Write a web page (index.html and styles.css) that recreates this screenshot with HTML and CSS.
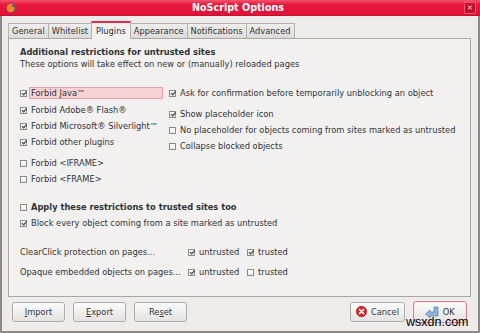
FILE: index.html
```html
<!DOCTYPE html>
<html lang="en">
<head>
  <meta charset="UTF-8" />
  <title>NoScript Options</title>
  <link rel="stylesheet" href="styles.css">
</head>
<body>
  <div class="window">
    <div class="titlebar">
      <svg class="app-icon" width="10" height="10" viewBox="0 0 10 10">
        <circle cx="5" cy="5" r="4.5" fill="#3a5ea8"/>
        <path d="M1 4 C1.5 1 5 0 7.5 1.5 C6 1.5 5 2.5 5.5 3.5 C7 3 8.5 4 8.8 5.5 C8.5 8.5 5.5 10 3 9 C1 8 0.5 6 1 4 Z" fill="#f08a1c"/>
      </svg>
      <span class="title">NoScript Options</span>
      <span class="close">&#x2715;</span>
    </div>

    <div class="main">
      <div class="tabs">
        <div class="tab">General</div>
        <div class="tab">Whitelist</div>
        <div class="tab active">Plugins</div>
        <div class="tab">Appearance</div>
        <div class="tab">Notifications</div>
        <div class="tab">Advanced</div>
      </div>

      <div class="panel">
        <div class="heading">Additional restrictions for untrusted sites</div>
        <div class="note">These options will take effect on new or (manually) reloaded pages</div>

        <div class="cols">
          <div class="col-left">
            <div class="row"><span class="cb on"></span><span class="lbl focus">Forbid Java™</span></div>
            <div class="row gap1"><span class="cb on"></span><span class="lbl">Forbid Adobe® Flash®</span></div>
            <div class="row"><span class="cb on"></span><span class="lbl">Forbid Microsoft® Silverlight™</span></div>
            <div class="row"><span class="cb on"></span><span class="lbl">Forbid other plugins</span></div>
            <div class="row gap5"><span class="cb"></span><span class="lbl">Forbid &lt;IFRAME&gt;</span></div>
            <div class="row"><span class="cb"></span><span class="lbl">Forbid &lt;FRAME&gt;</span></div>
          </div>
          <div class="col-right">
            <div class="row"><span class="cb on"></span><span class="lbl">Ask for confirmation before temporarily unblocking an object</span></div>
            <div class="row gap5"><span class="cb on"></span><span class="lbl">Show placeholder icon</span></div>
            <div class="row"><span class="cb"></span><span class="lbl">No placeholder for objects coming from sites marked as untrusted</span></div>
            <div class="row"><span class="cb"></span><span class="lbl">Collapse blocked objects</span></div>
          </div>
        </div>

        <div class="trusted">
          <div class="row"><span class="cb"></span><span class="lbl bold">Apply these restrictions to trusted sites too</span></div>
          <div class="row"><span class="cb on"></span><span class="lbl">Block every object coming from a site marked as untrusted</span></div>
        </div>

        <div class="pages">
          <div class="row">
            <span class="page-label">ClearClick protection on pages...</span>
            <span class="opt"><span class="cb on"></span><span class="lbl">untrusted</span></span>
            <span class="opt"><span class="cb on"></span><span class="lbl">trusted</span></span>
          </div>
          <div class="row gap4">
            <span class="page-label">Opaque embedded objects on pages...</span>
            <span class="opt"><span class="cb on"></span><span class="lbl">untrusted</span></span>
            <span class="opt"><span class="cb"></span><span class="lbl">trusted</span></span>
          </div>
        </div>
      </div>

      <div class="buttons">
        <button class="btn"><span><u>I</u>mport</span></button>
        <button class="btn"><span><u>E</u>xport</span></button>
        <button class="btn"><span>Re<u>s</u>et</span></button>
        <span class="spacer"></span>
        <button class="btn">
          <svg width="11" height="11" viewBox="0 0 12 12">
            <circle cx="6" cy="6" r="5.6" fill="#d8262c"/>
            <circle cx="6" cy="6" r="5.6" fill="none" stroke="#a3141a" stroke-width="0.8"/>
            <path d="M3.8 3.8 L8.2 8.2 M8.2 3.8 L3.8 8.2" stroke="#fff" stroke-width="1.8" stroke-linecap="round"/>
          </svg>
          <span>Cancel</span>
        </button>
        <button class="btn default">
          <svg width="14" height="12" viewBox="0 0 14 12">
            <path d="M0.5 8 L5 4 L5 6 L9 6 L9 1 L13 1 L13 10 L5 10 L5 12 Z" fill="#8fb3dd" stroke="#5b83b8" stroke-width="0.8" stroke-linejoin="round"/>
          </svg>
          <span>OK</span>
        </button>
      </div>
    </div>

    <div class="watermark">wsxdn.com</div>
  </div>
</body>
</html>
```

FILE: styles.css
```css
body {
  margin: 0;
  width: 480px;
  height: 333px;
  overflow: hidden;
  font-family: "DejaVu Sans", sans-serif;
  font-size: 8.3px;
  color: #2e3436;
}
.window {
  position: relative;
  height: 333px;
  display: flex;
  flex-direction: column;
  background-color: #edeceb;
}
.titlebar {
  height: 16px;
  flex: none;
  display: flex;
  align-items: center;
  position: relative;
  background: linear-gradient(#f3546c, #e8183c 30%, #e0123a);
  border-bottom: 1px solid #c90f30;
  box-sizing: border-box;
}
.app-icon {
  margin-left: 6px;
}
.title {
  flex: 1;
  text-align: center;
  color: #fff;
  font-weight: bold;
  font-size: 9.6px;
  margin-left: -4px;
}
.close {
  width: 10px;
  height: 10px;
  margin-right: 4px;
  border-radius: 2px;
  background-color: #c4102e;
  border: 1px solid #e85a70;
  color: #ffd6dc;
  font-size: 7px;
  line-height: 10px;
  text-align: center;
  box-sizing: content-box;
}

/* main area under the title bar */
.main {
  flex: 1;
  display: flex;
  flex-direction: column;
  padding: 5px 7px 9px 6px;
  border: 2px solid #8a8988;
  border-top: none;
}
.tabs {
  display: flex;
  align-items: flex-end;
  height: 17px;
  position: relative;
  z-index: 1;
}
.tab {
  height: 15px;
  line-height: 14px;
  padding: 0 3px;
  border: 1px solid #b4b2af;
  border-bottom: none;
  border-right: none;
  background: linear-gradient(#eeedeb, #dedcd9);
  box-sizing: border-box;
}
.tab:last-child {
  border-right: 1px solid #b4b2af;
}
.tab.active {
  height: 18px;
  margin-bottom: -1px;
  line-height: 16px;
  background: #f2f1f0;
  border-top: 2px solid #e8294a;
  border-right: 1px solid #b4b2af;
  padding: 0 4px;
}
.tab.active + .tab {
  border-left: none;
}
.panel {
  flex: 1;
  background-color: #f2f1f0;
  border: 1px solid #aaa8a5;
  padding: 7px 11px 0 11px;
}
.heading {
  font-weight: bold;
  line-height: 12px;
}
.note {
  line-height: 12px;
}
.cols {
  display: flex;
  margin-top: 15px;
}
.col-left {
  width: 149px;
}
.row {
  display: flex;
  align-items: center;
  height: 16px;
}
.gap1 { margin-top: 1px; }
.gap4 { margin-top: 4px; }
.gap5 { margin-top: 5px; }

.cb {
  width: 7px;
  height: 7px;
  flex: none;
  border: 1px solid #8c8b89;
  background: linear-gradient(#ffffff, #ebeae8);
  box-sizing: border-box;
  position: relative;
  margin-right: 2px;
}
.cb.on::after {
  content: "";
  position: absolute;
  left: 1.5px;
  top: -0.5px;
  width: 1.5px;
  height: 3.5px;
  border-right: 1px solid #2e3436;
  border-bottom: 1px solid #2e3436;
  transform: rotate(40deg);
}
.lbl {
  padding: 0 1px;
  border: 1px solid transparent;
  line-height: 10px;
  white-space: nowrap;
}
.lbl.focus {
  width: 130px;
  background-color: #f7d2d5;
  border-color: #e8a0a8;
}
.bold {
  font-weight: bold;
}
.trusted {
  margin-top: 12px;
}
.pages {
  margin-top: 13px;
}
.page-label {
  width: 168px;
}
.opt {
  display: flex;
  align-items: center;
  width: 59px;
}

.buttons {
  display: flex;
  align-items: center;
  gap: 8px;
  height: 21px;
  margin-top: 4px;
  padding: 0 4px;
}
.spacer {
  flex: 1;
}
.btn {
  height: 20px;
  min-width: 53px;
  padding: 0 5px;
  font-family: "DejaVu Sans", sans-serif;
  font-size: 8.3px;
  color: #2e3436;
  background: linear-gradient(#fbfbfb, #e4e3e1);
  border: 1px solid #aeacaa;
  border-radius: 3px;
  white-space: nowrap;
}
.btn svg {
  vertical-align: middle;
  margin-right: 1px;
}
.btn span {
  vertical-align: middle;
}
.btn.default {
  height: 22px;
  min-width: 54px;
  border-color: #d9828f;
  box-shadow: inset 0 0 0 1px #f6e6e8;
}
.watermark {
  position: absolute;
  left: 406px;
  top: 315px;
  font-family: "Liberation Sans", Arial, sans-serif;
  font-size: 12.5px;
  color: #000;
}
```
